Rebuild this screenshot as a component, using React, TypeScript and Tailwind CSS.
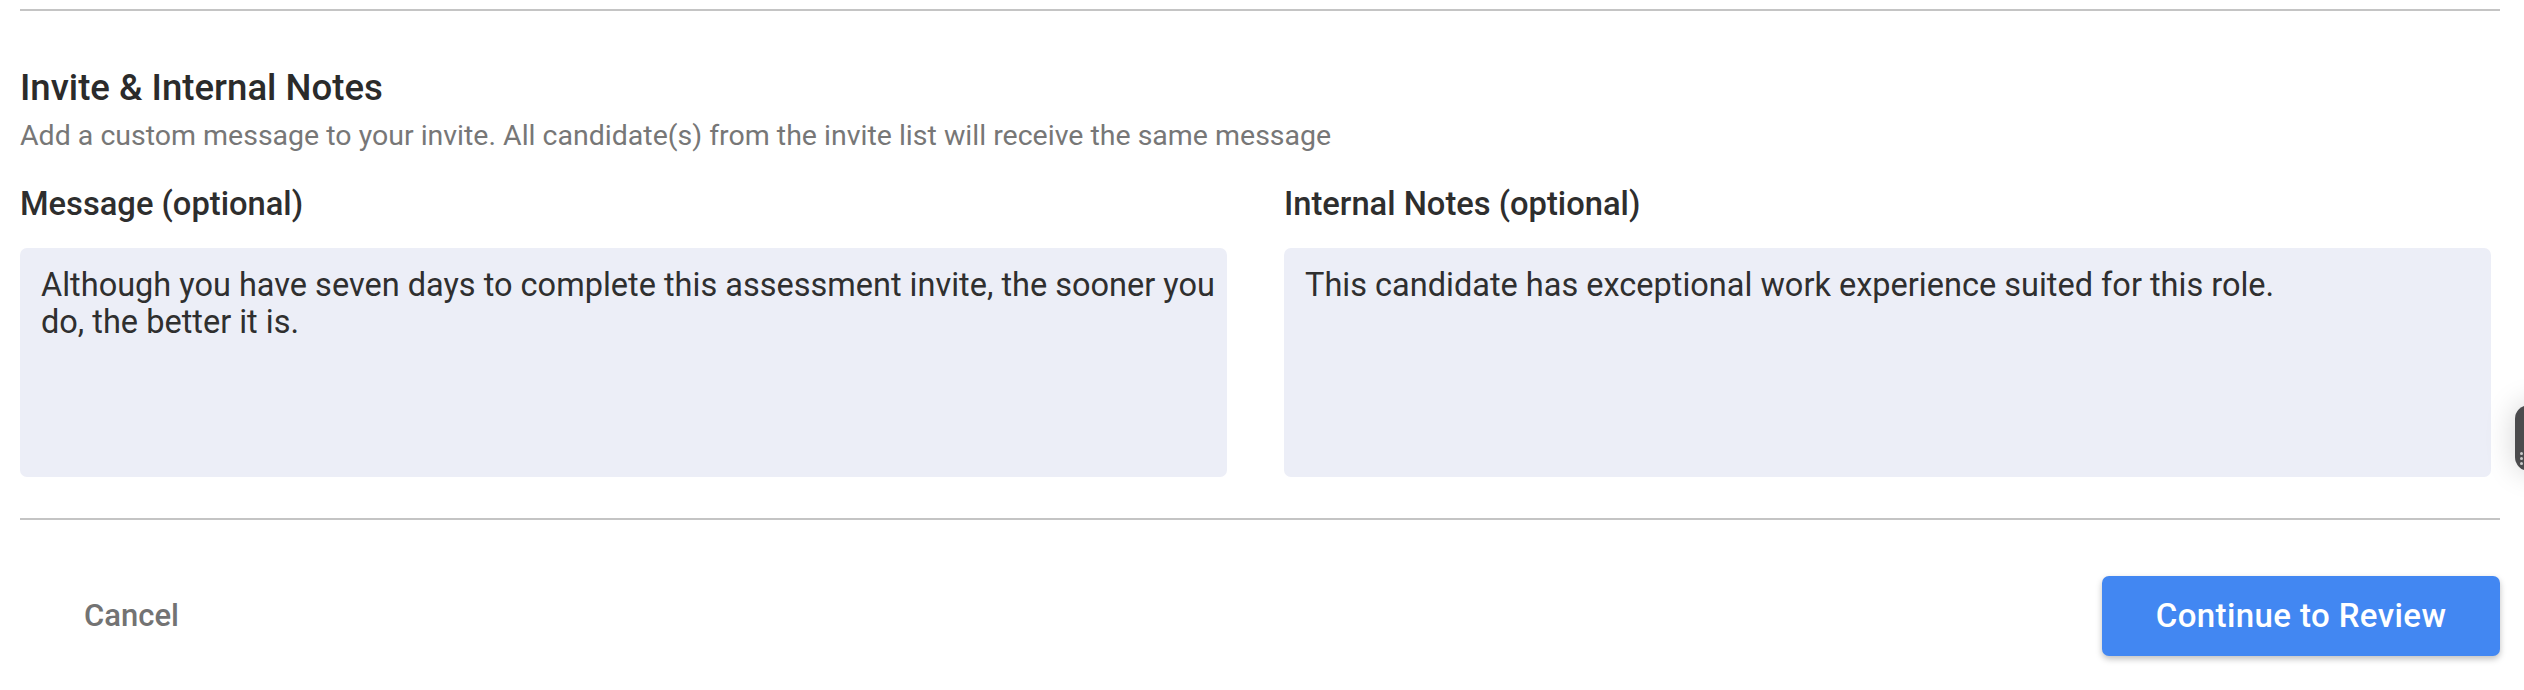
import React from "react";

const font = { fontFamily: "Roboto, 'Noto Sans', Arial, sans-serif" };

function NoteField({ label, value }: { label: string; value: string }) {
  return (
    <div className="flex flex-col">
      <label className="h-[38px] text-[32.7px] leading-[38px] font-medium text-[#2e2e2e]">{label}</label>
      <div className="mt-[25px] h-[229px] rounded-[7px] bg-[#eceef7] pl-[21px] pr-[4px] pt-[19px] text-[32.5px] leading-[37px] text-[#2f2f2f]">
        {value}
      </div>
    </div>
  );
}

export default function App() {
  return (
    <div className="relative h-[690px] w-full overflow-hidden bg-white" style={font}>
      <div className="pl-[20px] pr-[24px] pt-[9px]">
        <div className="h-[2px] bg-[#c4c4c4]" />

        <h2 className="mt-[55px] h-[43px] text-[36.6px] leading-[43px] font-medium text-[#2b2b2b]">
          Invite &amp; Internal Notes
        </h2>
        <p className="mt-[10px] h-[34px] text-[28.5px] leading-[34px] text-[#777777]">
          Add a custom message to your invite. All candidate(s) from the invite list will receive the same message
        </p>

        <div className="mt-[32px] grid grid-cols-2 gap-[57px] pr-[9px]">
          <NoteField
            label="Message (optional)"
            value="Although you have seven days to complete this assessment invite, the sooner you do, the better it is."
          />
          <NoteField
            label="Internal Notes (optional)"
            value="This candidate has exceptional work experience suited for this role."
          />
        </div>

        <div className="mt-[41px] h-[2px] bg-[#c4c4c4]" />

        <div className="mt-[56px] flex items-center justify-between">
          <button className="ml-[64px] text-[31px] font-medium text-[#737373]">Cancel</button>
          <button className="h-[80px] w-[398px] rounded-[7px] bg-[#4287f2] text-[33px] font-medium tracking-[0.4px] text-white shadow-[0_3px_6px_rgba(0,0,0,0.25)]">
            Continue to Review
          </button>
        </div>
      </div>

      <div className="absolute left-[2515px] top-[405px] h-[66px] w-[44px] rounded-[14px] bg-[#4b4b4d] shadow-[0_0_30px_rgba(0,0,0,0.18)]">
        <div className="absolute left-[5px] top-[47px] flex flex-col gap-[2px]">
          <span className="h-[3px] w-[3px] rounded-full bg-[#c8c8c8]" />
          <span className="h-[3px] w-[3px] rounded-full bg-[#c8c8c8]" />
          <span className="h-[3px] w-[3px] rounded-full bg-[#c8c8c8]" />
        </div>
      </div>
    </div>
  );
}
